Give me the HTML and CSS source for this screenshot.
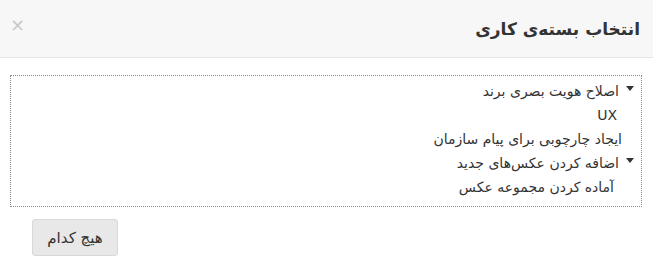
FILE: index.html
```html
<!DOCTYPE html>
<html lang="fa" dir="rtl">
<head>
<meta charset="utf-8">
<link rel="stylesheet" href="styles.css">
</head>
<body>
<div class="dialog">
  <div class="header">
    <h4 class="title">انتخاب بسته‌ی کاری</h4>
    <span class="close">×</span>
  </div>
  <div class="content">
    <div class="tree">
      <div class="row parent r1"><span class="caret"></span><span>اصلاح هویت بصری برند</span></div>
      <div class="row r2">UX</div>
      <div class="row r3">ایجاد چارچوبی برای پیام سازمان</div>
      <div class="row parent r4"><span class="caret"></span><span>اضافه کردن عکس‌های جدید</span></div>
      <div class="row r5">آماده کردن مجموعه عکس</div>
    </div>
    <div class="actions">
      <button class="btn">هیچ کدام</button>
    </div>
  </div>
</div>
</body>
</html>
```
FILE: styles.css
```css
html, body {
  margin: 0;
  padding: 0;
  background: #ffffff;
}
body {
  font-family: "DejaVu Sans", sans-serif;
  color: #333;
}
.header {
  height: 57px;
  background: #f7f7f7;
  border-bottom: 1px solid #e5e5e5;
  display: flex;
  align-items: center;
  justify-content: space-between;
  padding: 0 13px 0 10px;
}
.title {
  margin: 0;
  font-size: 17px;
  font-weight: bold;
  color: #333;
}
.close {
  font-size: 18px;
  color: #c8c8c8;
  line-height: 1;
  margin-top: -8px;
}
.content {
  padding: 17px 11px 0 10px;
}
.tree {
  border: 1px dotted #888;
  height: 127px;
  padding-top: 3px;
  font-size: 14px;
}
.row {
  height: 24px;
  line-height: 24px;
  display: flex;
  align-items: center;
  white-space: nowrap;
}
.caret {
  width: 0;
  height: 0;
  border-left: 4px solid transparent;
  border-right: 4px solid transparent;
  border-top: 5px solid #333;
  margin-right: 7px;
  margin-left: 7px;
  margin-top: -6px;
}
.r2 { padding-right: 24px; }
.r3 { padding-right: 19px; }
.r5 { padding-right: 27px; }
.actions {
  display: flex;
  justify-content: flex-end;
  padding: 12px 0 0 22px;
}
.btn {
  font-family: "DejaVu Sans", sans-serif;
  font-size: 15px;
  color: #333;
  background: #e8e8e8;
  border: 1px solid #d8d8d8;
  border-radius: 3px;
  width: 86px;
  height: 37px;
  padding: 0;
}
```
